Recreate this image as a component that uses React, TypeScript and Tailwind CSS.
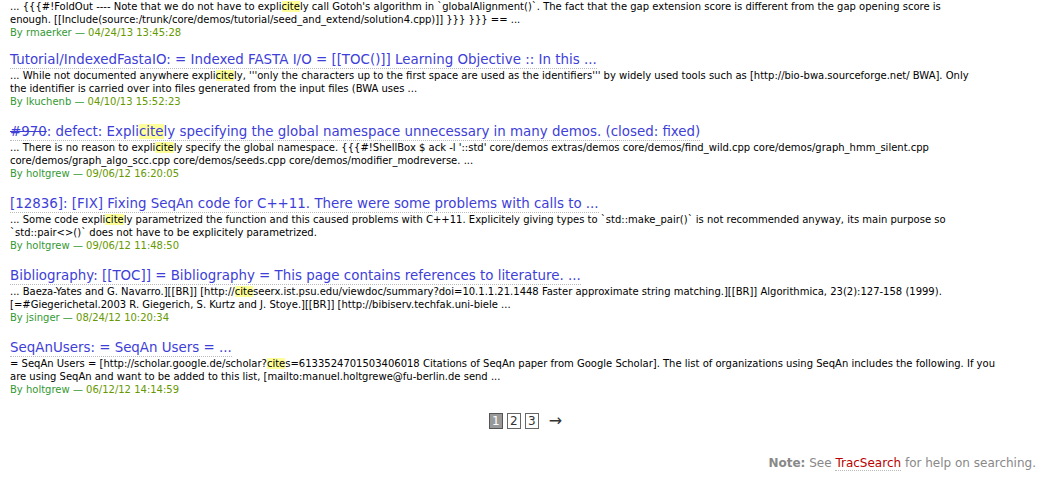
import React from 'react';

type Seg = string | { hl: string };

type Result = {
  title?: Seg[];
  closed?: string;
  lines: Seg[][];
  author: string;
  date: string;
};

const results: Result[] = [
  {
    lines: [
      ['... {{{#!FoldOut ---- Note that we do not have to expli', { hl: 'cite' }, "ly call Gotoh's algorithm in `globalAlignment()`. The fact that the gap extension score is different from the gap opening score is"],
      ['enough. [[Include(source:/trunk/core/demos/tutorial/seed_and_extend/solution4.cpp)]] }}} }}} == ...'],
    ],
    author: 'rmaerker',
    date: '04/24/13 13:45:28',
  },
  {
    title: ['Tutorial/IndexedFastaIO: = Indexed FASTA I/O = [[TOC()]] Learning Objective :: In this ...'],
    lines: [
      ['... While not documented anywhere expli', { hl: 'cite' }, "ly, '''only the characters up to the first space are used as the identifiers''' by widely used tools such as [http://bio-bwa.sourceforge.net/ BWA]. Only"],
      ['the identifier is carried over into files generated from the input files (BWA uses ...'],
    ],
    author: 'lkuchenb',
    date: '04/10/13 15:52:23',
  },
  {
    closed: '#970',
    title: [': defect: Expli', { hl: 'cite' }, 'ly specifying the global namespace unnecessary in many demos. (closed: fixed)'],
    lines: [
      ['... There is no reason to expli', { hl: 'cite' }, "ly specify the global namespace. {{{#!ShellBox $ ack -l '::std' core/demos extras/demos core/demos/find_wild.cpp core/demos/graph_hmm_silent.cpp"],
      ['core/demos/graph_algo_scc.cpp core/demos/seeds.cpp core/demos/modifier_modreverse. ...'],
    ],
    author: 'holtgrew',
    date: '09/06/12 16:20:05',
  },
  {
    title: ['[12836]: [FIX] Fixing SeqAn code for C++11. There were some problems with calls to ...'],
    lines: [
      ['... Some code expli', { hl: 'cite' }, 'ly parametrized the function and this caused problems with C++11. Explicitely giving types to `std::make_pair()` is not recommended anyway, its main purpose so'],
      ['`std::pair<>()` does not have to be explicitely parametrized.'],
    ],
    author: 'holtgrew',
    date: '09/06/12 11:48:50',
  },
  {
    title: ['Bibliography: [[TOC]] = Bibliography = This page contains references to literature. ...'],
    lines: [
      ['... Baeza-Yates and G. Navarro.][[BR]] [http://', { hl: 'cite' }, 'seerx.ist.psu.edu/viewdoc/summary?doi=10.1.1.21.1448 Faster approximate string matching.][[BR]] Algorithmica, 23(2):127-158 (1999).'],
      ['[=#Giegerichetal.2003 R. Giegerich, S. Kurtz and J. Stoye.][[BR]] [http://bibiserv.techfak.uni-biele ...'],
    ],
    author: 'jsinger',
    date: '08/24/12 10:20:34',
  },
  {
    title: ['SeqAnUsers: = SeqAn Users = ...'],
    lines: [
      ['= SeqAn Users = [http://scholar.google.de/scholar?', { hl: 'cite' }, 's=6133524701503406018 Citations of SeqAn paper from Google Scholar]. The list of organizations using SeqAn includes the following. If you'],
      ['are using SeqAn and want to be added to this list, [mailto:manuel.holtgrewe@fu-berlin.de send ...'],
    ],
    author: 'holtgrew',
    date: '06/12/12 14:14:59',
  },
];

const renderSegs = (segs: Seg[]) =>
  segs.map((s, i) =>
    typeof s === 'string' ? (
      <React.Fragment key={i}>{s}</React.Fragment>
    ) : (
      <span key={i} className="bg-[#ffff99]">
        {s.hl}
      </span>
    )
  );

export default function App() {
  return (
    <div className="w-[1057px] h-[487px] overflow-hidden bg-white font-['DejaVu_Sans',Verdana,sans-serif] text-black">
      <div className="pl-[10px] pr-[20px]">
        {results.map((r, idx) => (
          <div key={idx} className={idx === 0 ? '' : idx === 1 ? 'mt-[13px]' : 'mt-[16px]'}>
            {r.title && (
              <div className="h-[17px] leading-[16px] text-[13.4px] whitespace-nowrap">
                <a className="text-[#3e3ed8] border-b border-dotted border-[#bbb] pb-[1px]">
                  {r.closed && <span className="line-through">{r.closed}</span>}
                  {renderSegs(r.title)}
                </a>
              </div>
            )}
            <div className="text-[10px] leading-[13px] whitespace-nowrap">
              {r.lines.map((l, j) => (
                <div key={j}>{renderSegs(l)}</div>
              ))}
              <div>
                <span className="text-[#339933]">By {r.author}</span>
                <span className="text-[#339933]"> — </span>
                <span className="text-[#669900]">{r.date}</span>
              </div>
            </div>
          </div>
        ))}
      </div>

      <div className="mt-[13px] flex justify-center items-center gap-[4px] text-[12px] pr-[6px]">
        <span className="w-[14px] h-[16px] flex items-center justify-center bg-[#999] border border-[#555] text-white">1</span>
        <span className="w-[14px] h-[16px] flex items-center justify-center border border-[#666] text-[#333]">2</span>
        <span className="w-[14px] h-[16px] flex items-center justify-center border border-[#666] text-[#333]">3</span>
        <span className="ml-[6px] text-[#333] text-[16px]">→</span>
      </div>

      <div className="mt-[21px] flex justify-end pr-[21px] text-[12px] text-[#888]">
        <span>
          <b>Note:</b> See{' '}
          <a className="text-[#b00] border-b border-dotted border-[#bbb]">TracSearch</a> for help on searching.
        </span>
      </div>
    </div>
  );
}
